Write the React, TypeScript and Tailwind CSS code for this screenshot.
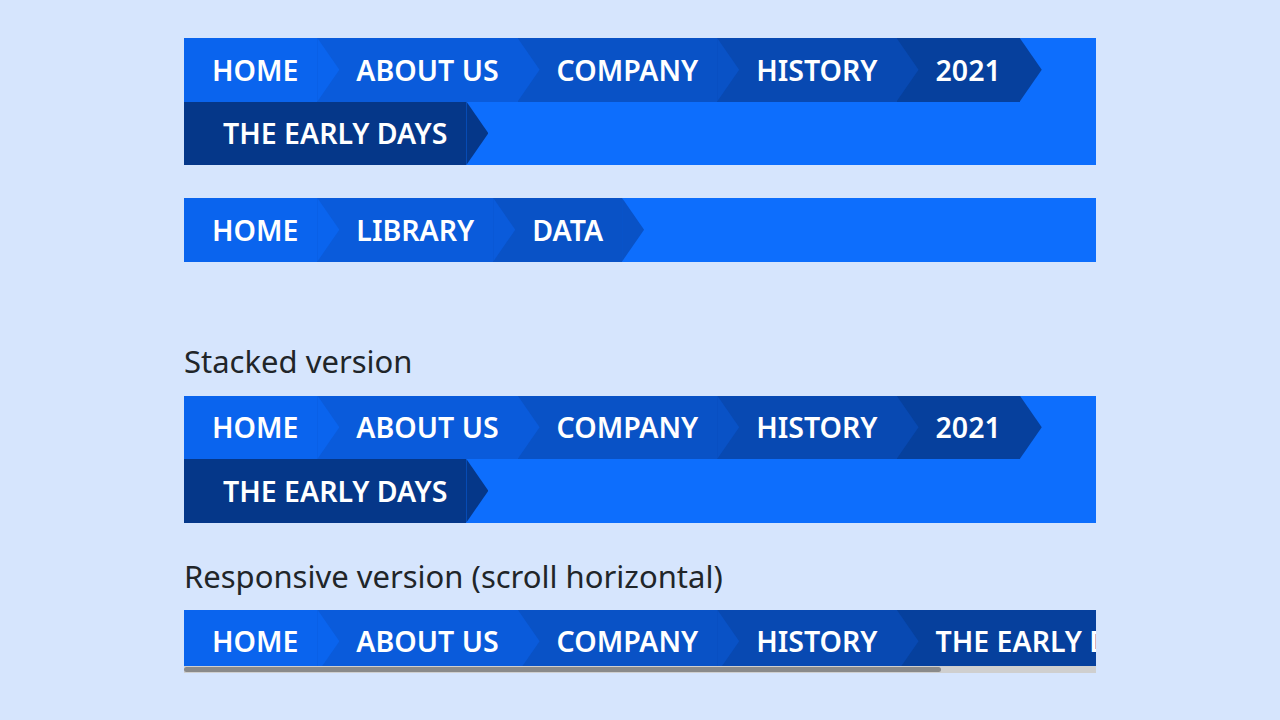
import React from "react";

const COLORS: { bg: string; arrow: string }[] = [
  { bg: "bg-[#0a64ee]", arrow: "bg-[#0a64ee]" },
  { bg: "bg-[#0a5bdb]", arrow: "bg-[#0a5bdb]" },
  { bg: "bg-[#0952c6]", arrow: "bg-[#0952c6]" },
  { bg: "bg-[#0849b2]", arrow: "bg-[#0849b2]" },
  { bg: "bg-[#06409d]", arrow: "bg-[#06409d]" },
  { bg: "bg-[#053789]", arrow: "bg-[#053789]" },
];

function Crumb({ label, idx, first }: { label: string; idx: number; first?: boolean }) {
  const c = COLORS[idx];
  return (
    <div
      className={`relative flex h-[63.5px] shrink-0 items-center pr-[19px] ${first ? "pl-[28px]" : "pl-[39px]"} ${c.bg}`}
    >
      <span className="whitespace-nowrap text-[28.5px] font-semibold uppercase leading-none text-white">{label}</span>
      <span
        className={`absolute top-0 right-[-22px] z-10 h-full w-[22px] [clip-path:polygon(0_0,100%_50%,0_100%)] ${c.arrow}`}
      />
    </div>
  );
}

function Bar({ items }: { items: string[] }) {
  return (
    <div className="flex w-full flex-wrap bg-[#0d6efd]">
      {items.map((it, i) => (
        <Crumb key={it} label={it} idx={i} first={i === 0} />
      ))}
    </div>
  );
}

export default function App() {
  const full = ["Home", "About us", "Company", "History", "2021", "The early days"];
  const scroll = ["Home", "About us", "Company", "History", "The early days"];
  return (
    <div
      className="min-h-[720px] w-full bg-[#d6e5fd] pt-[38px]"
      style={{ fontFamily: '"Noto Sans", "Open Sans", sans-serif' }}
    >
      <div className="mx-auto flex w-[912px] flex-col">
        <Bar items={full} />
        <div className="mt-[33px]">
          <Bar items={["Home", "Library", "Data"]} />
        </div>
        <h2 className="mt-[81px] mb-[17px] text-[31px] font-normal leading-[36px] text-[#212529]">Stacked version</h2>
        <Bar items={full} />
        <h2 className="mt-[35px] mb-[16px] text-[31px] font-normal leading-[36px] text-[#212529]">
          Responsive version (scroll horizontal)
        </h2>
        <div className="flex h-[63.5px] w-full flex-col">
          <div className="h-[56px] w-full overflow-hidden bg-[#0d6efd]">
            <div className="flex w-max">
              {scroll.map((it, i) => (
                <Crumb key={it} label={it} idx={i} first={i === 0} />
              ))}
            </div>
          </div>
          <div className="flex h-[7.5px] w-full items-center bg-[#cfcfcf]">
            <div className="h-[5px] w-[757px] rounded-full bg-[#8a8a8a]" />
          </div>
        </div>
      </div>
    </div>
  );
}
